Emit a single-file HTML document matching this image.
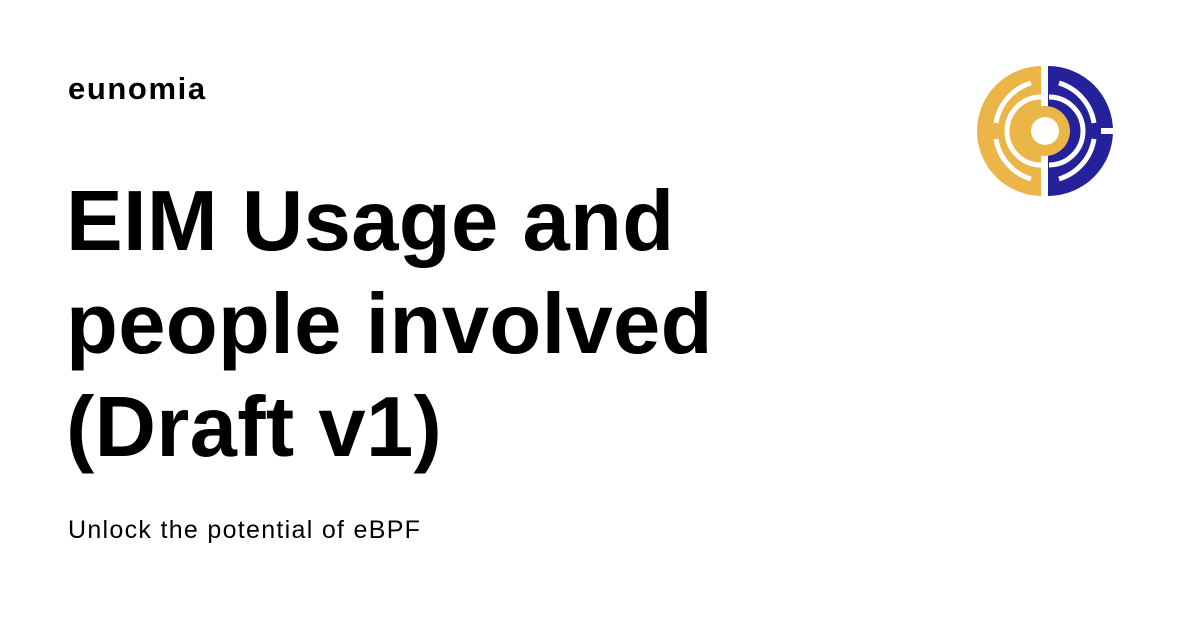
<!DOCTYPE html>
<html><head><style>
body{margin:0;width:1200px;height:630px;background:#fff;font-family:"Liberation Sans",sans-serif;color:#000;position:relative;overflow:hidden}
.brand{position:absolute;left:68px;top:71px;font-size:31px;font-weight:bold;letter-spacing:1.6px}
.title{position:absolute;left:66px;top:170px;font-size:85px;font-weight:bold;line-height:103px;letter-spacing:0.3px;width:800px}
.sub{position:absolute;left:68px;top:516px;font-size:25px;letter-spacing:1.3px}
svg{position:absolute;left:975px;top:61px}
</style></head><body>
<div class="brand">eunomia</div>
<div class="title">EIM Usage and<br>people involved<br>(Draft v1)</div>
<div class="sub">Unlock the potential of eBPF</div>
<svg width="140" height="140" viewBox="-70 -70 140 140">
<path d="M-3,-65 A65,65 0 0 0 -3,65 Z" fill="#ebb548"/>
<path d="M3,-65 A65,65 0 0 1 3,65 Z" fill="#24219a"/>
<g fill="none" stroke="#fff" stroke-width="5">
<path d="M-14,-48 A50,50 0 0 0 -49,-8"/>
<path d="M-49,8 A50,50 0 0 0 -14,48"/>
<path d="M14,-48 A50,50 0 0 1 49,-8"/>
<path d="M49,8 A50,50 0 0 1 14,48"/>
<path d="M-4,-34 A34,34 0 0 0 -4,34"/>
<path d="M4,-34 A34,34 0 0 1 4,34"/>
</g>
<rect x="-4" y="-70" width="7" height="140" fill="#fff"/>
<rect x="56" y="-3" width="14" height="6" fill="#fff"/>
<circle cx="0" cy="0" r="25" fill="#ebb548"/>
<circle cx="0" cy="0" r="14" fill="#fff"/>
</svg>
</body></html>
